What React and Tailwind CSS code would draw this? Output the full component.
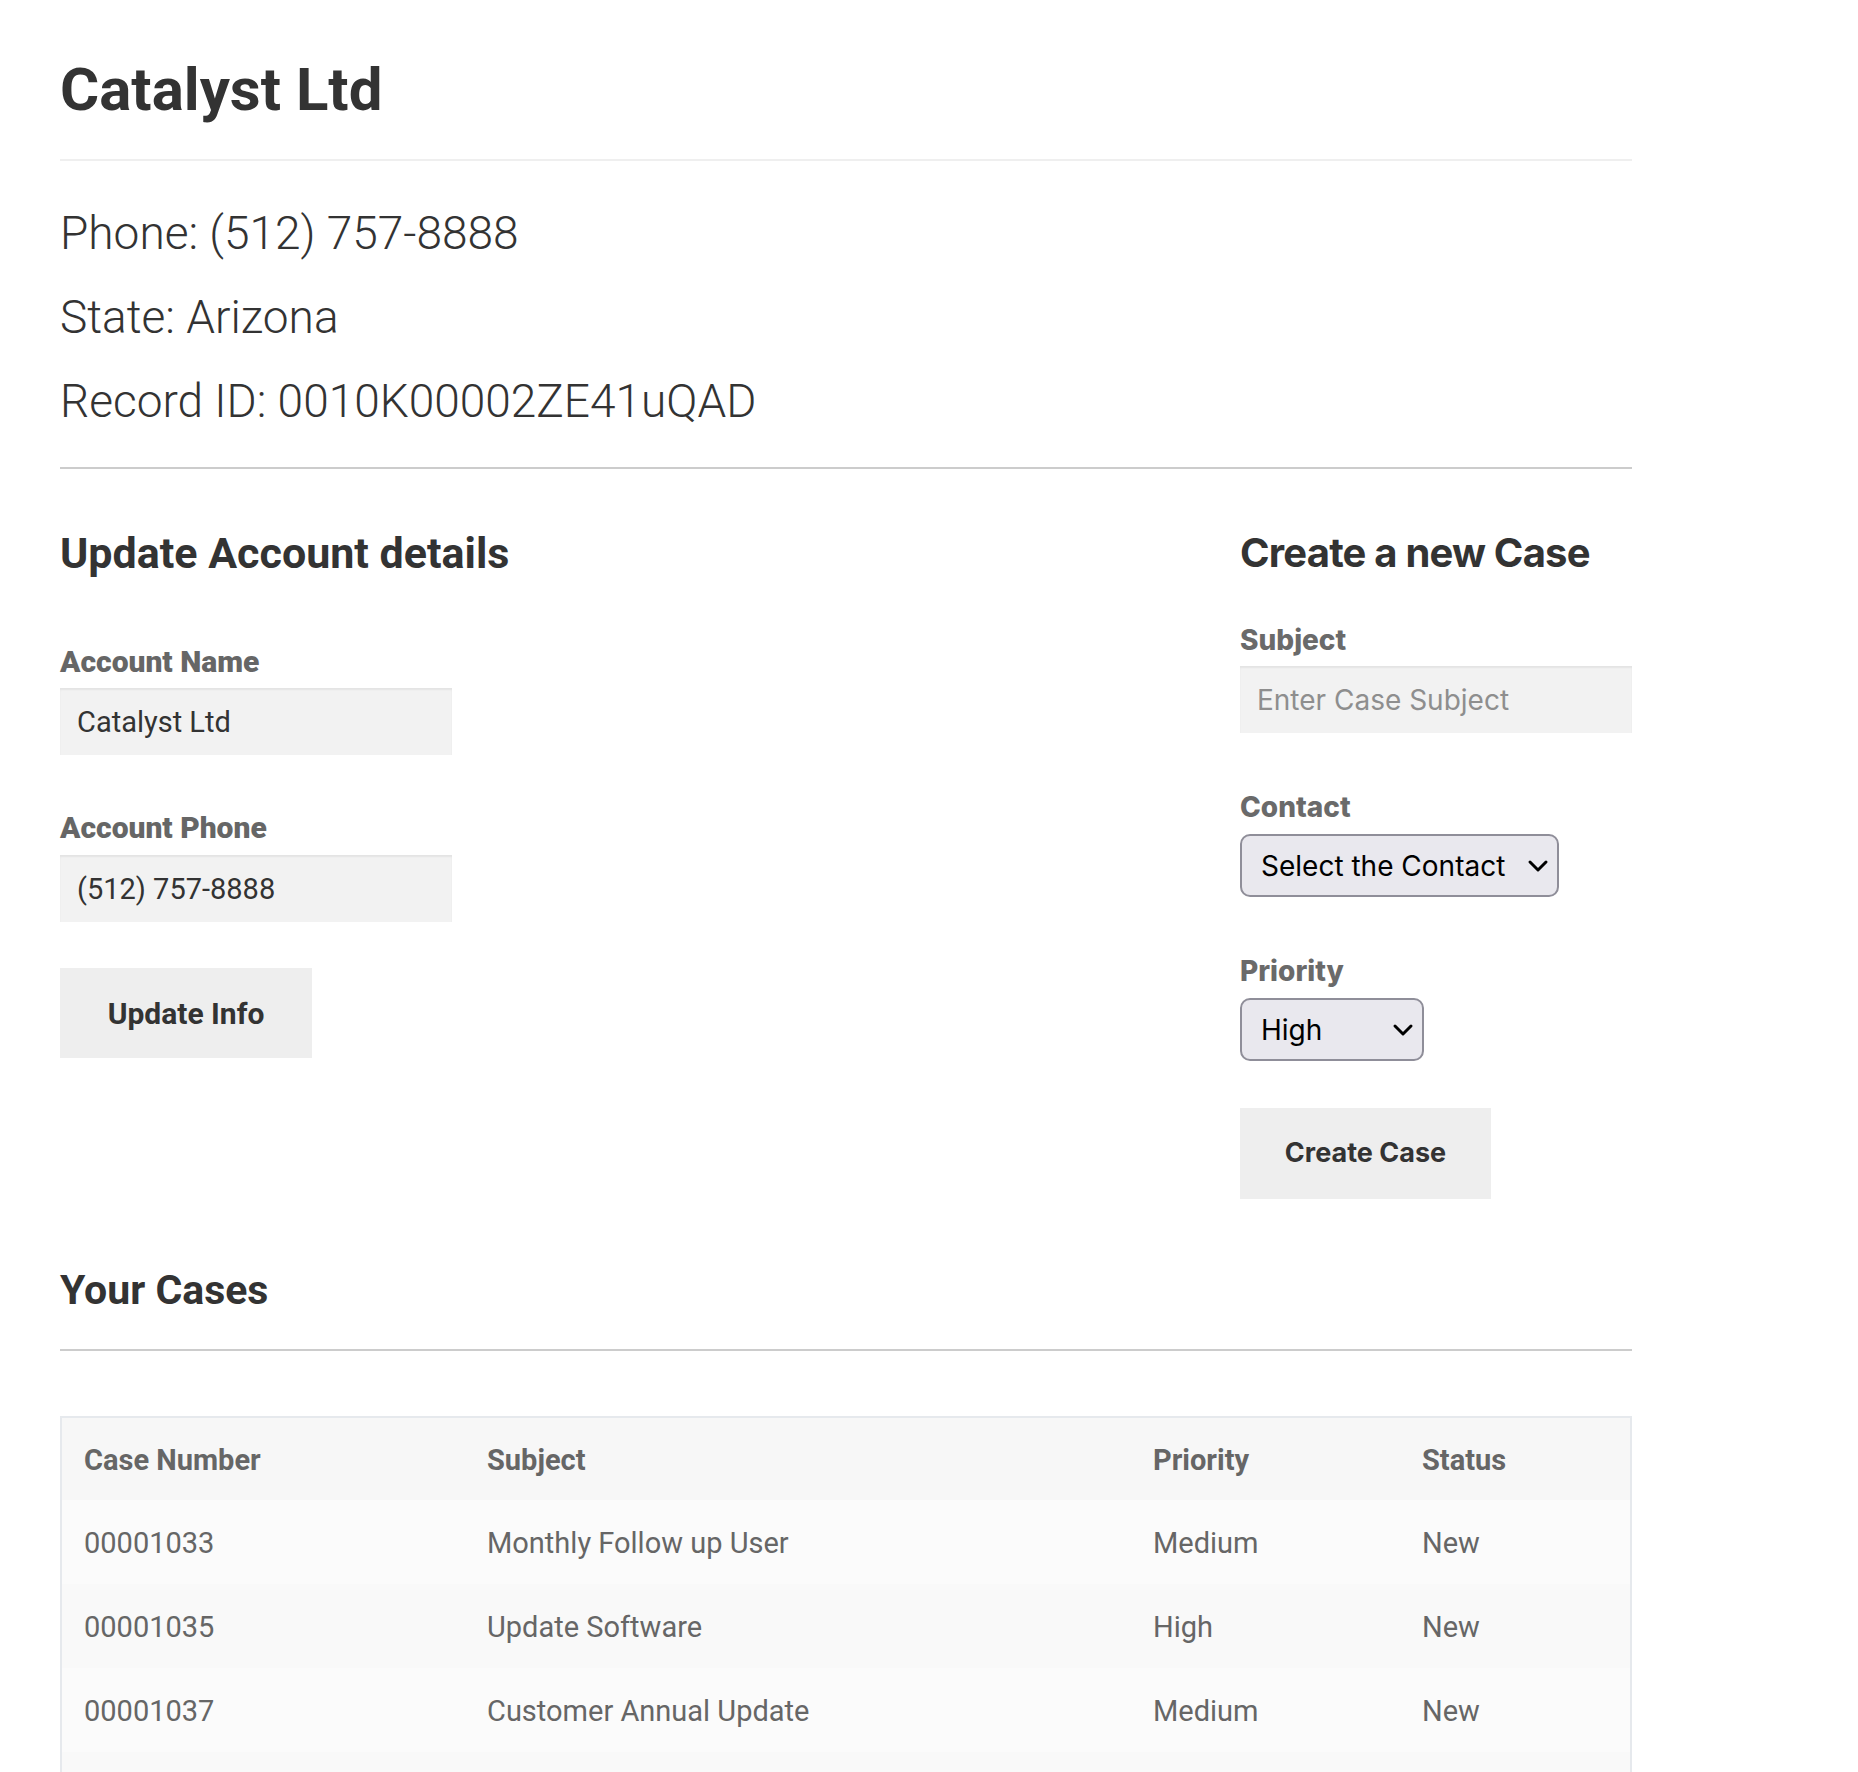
import { ChevronDown } from 'lucide-react'

const CASES = [
  { number: '00001033', subject: 'Monthly Follow up User', priority: 'Medium', status: 'New' },
  { number: '00001035', subject: 'Update Software', priority: 'High', status: 'New' },
  { number: '00001037', subject: 'Customer Annual Update', priority: 'Medium', status: 'New' },
]

function FieldLabel({ children, className = '' }) {
  return <div className={`h-[36px] font-[Roboto,sans-serif] text-[30px] leading-[36px] font-black text-[#666666] ${className}`}>{children}</div>
}

function CaseLabel({ children, className = '' }) {
  return <div className={`h-[36px] font-[Inter,sans-serif] text-[28px] leading-[36px] font-extrabold text-[#6a6a6a] ${className}`}>{children}</div>
}

function SelectBox({ value, className }) {
  return (
    <div className={`relative h-[63px] ${className}`}>
      <select defaultValue={value} className="h-full w-full appearance-none rounded-[10px] border-2 border-[#8f8e99] bg-[#e9e8ee] pl-[19px] font-[Inter,sans-serif] text-[28px] text-black outline-none">
        <option>{value}</option>
      </select>
      <ChevronDown size={32} strokeWidth={3} absoluteStrokeWidth className="pointer-events-none absolute right-[5px] top-1/2 -translate-y-1/2 text-black" />
    </div>
  )
}

export default function App() {
  return (
    <div className="min-h-screen bg-white pt-[54px] pl-[60px] font-[Roboto,sans-serif] text-[#333333]">
      <div className="w-[1572px]">
        <h1 className="h-[72px] text-[60px] leading-[72px] font-bold">Catalyst Ltd</h1>
        <div className="mt-[33px] h-[2px] bg-[#efefef]" />

        <div className="mt-[30px] text-[46px] leading-[84px] font-light">
          <p>Phone: (512) 757-8888</p>
          <p>State: Arizona</p>
          <p>Record ID: 0010K00002ZE41uQAD</p>
        </div>
        <div className="mt-[24px] h-[2px] bg-[#cccccc]" />

        <div className="mt-[58px] flex justify-between">
          <section>
            <h2 className="h-[52px] text-[43px] leading-[52px] font-bold">Update Account details</h2>
            <FieldLabel className="mt-[65px]">Account Name</FieldLabel>
            <input defaultValue="Catalyst Ltd" className="mt-[8px] block h-[67px] w-[392px] bg-[#f2f2f2] px-[17px] text-[29px] text-[#333333] shadow-[inset_0_2px_2px_rgba(0,0,0,0.06)] outline-none" />
            <FieldLabel className="mt-[55px]">Account Phone</FieldLabel>
            <input defaultValue="(512) 757-8888" className="mt-[9px] block h-[67px] w-[392px] bg-[#f2f2f2] px-[17px] text-[29px] text-[#333333] shadow-[inset_0_2px_2px_rgba(0,0,0,0.06)] outline-none" />
            <button className="mt-[46px] h-[90px] w-[252px] bg-[#eeeeee] text-[30px] font-bold text-[#333333]">Update Info</button>
          </section>

          <section className="w-[392px] font-[Inter,sans-serif]">
            <h2 className="h-[52px] text-[40px] leading-[52px] font-bold tracking-[-0.02em] text-[#333333]">Create a new Case</h2>
            <CaseLabel className="mt-[43px]">Subject</CaseLabel>
            <input placeholder="Enter Case Subject" className="mt-[8px] block h-[67px] w-[392px] bg-[#f2f2f2] px-[17px] text-[28px] text-[#333333] shadow-[inset_0_2px_2px_rgba(0,0,0,0.06)] outline-none placeholder:text-[#8e8e8e]" />
            <CaseLabel className="mt-[56px]">Contact</CaseLabel>
            <SelectBox value="Select the Contact" className="mt-[9px] w-[319px]" />
            <CaseLabel className="mt-[56px]">Priority</CaseLabel>
            <SelectBox value="High" className="mt-[9px] w-[184px]" />
            <button className="mt-[47px] h-[91px] w-[251px] bg-[#eeeeee] text-[27px] font-bold text-[#333333]">Create Case</button>
          </section>
        </div>

        <h2 className="mt-[65px] h-[52px] text-[41px] leading-[52px] font-bold">Your Cases</h2>
        <div className="mt-[33px] h-[2px] bg-[#cccccc]" />

        <table className="mt-[65px] w-full table-fixed border-collapse border-2 border-[#e6e9ed] text-left text-[29px] text-[#666666]">
          <colgroup>
            <col className="w-[404px]" />
            <col className="w-[666px]" />
            <col className="w-[269px]" />
            <col />
          </colgroup>
          <thead>
            <tr className="h-[83px] bg-[#f7f7f7]">
              <th className="pt-[4px] pl-[22px] font-bold">Case Number</th>
              <th className="pt-[4px] pl-[22px] font-bold">Subject</th>
              <th className="pt-[4px] pl-[22px] font-bold">Priority</th>
              <th className="pt-[4px] pl-[22px] font-bold">Status</th>
            </tr>
          </thead>
          <tbody>
            {CASES.map((item, index) => (
              <tr key={item.number} className={`h-[84px] ${index % 2 === 0 ? 'bg-[#fbfbfb]' : 'bg-[#f9f9f9]'}`}>
                <td className="pt-[4px] pl-[22px]">{item.number}</td>
                <td className="pt-[4px] pl-[22px]">{item.subject}</td>
                <td className="pt-[4px] pl-[22px]">{item.priority}</td>
                <td className="pt-[4px] pl-[22px]">{item.status}</td>
              </tr>
            ))}
            <tr className="h-[84px] bg-[#f9f9f9]">
              <td colSpan={4} />
            </tr>
          </tbody>
        </table>
      </div>
    </div>
  )
}
